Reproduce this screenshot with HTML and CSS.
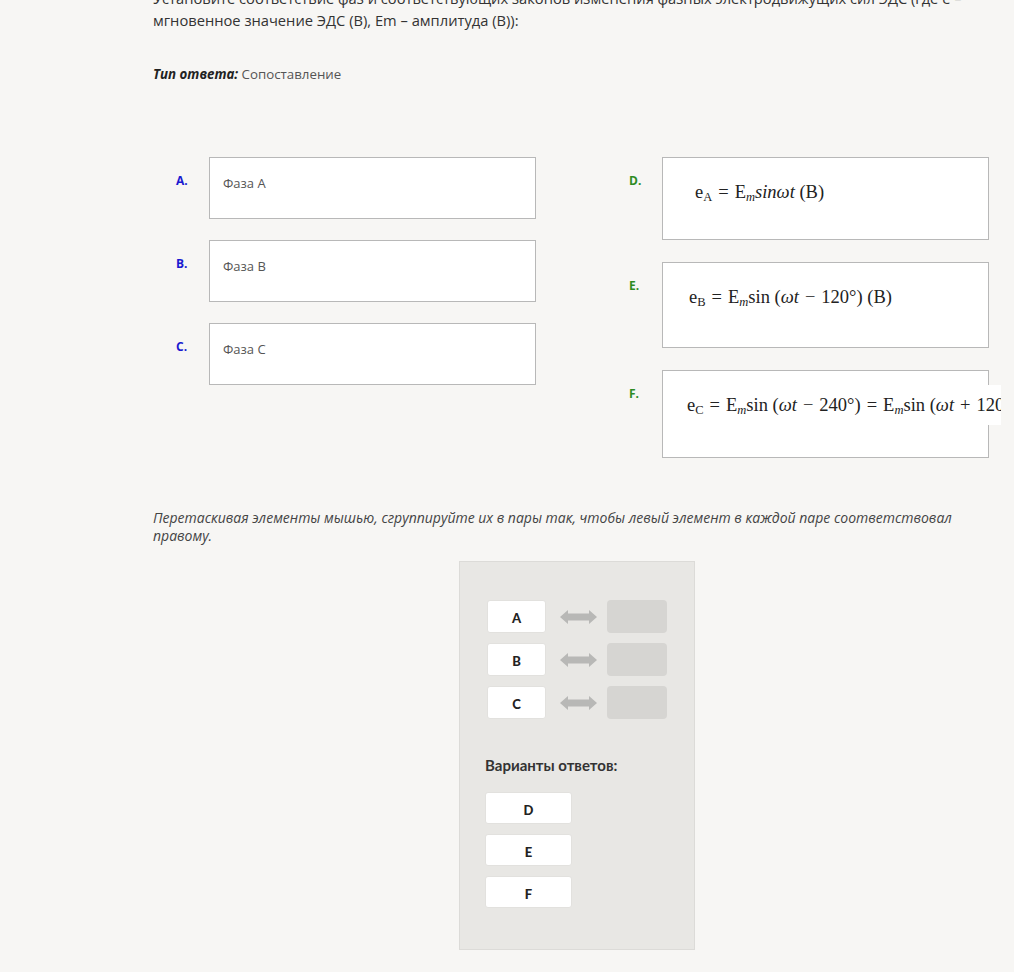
FILE: index.html
```html
<!DOCTYPE html>
<html lang="ru">
<head>
<meta charset="utf-8">
<link rel="stylesheet" href="styles.css">
</head>
<body>
<main class="page">
  <p class="question">Установите соответствие фаз и соответствующих законов изменения фазных электродвижущих сил ЭДС (где е – мгновенное значение ЭДС (В), Em – амплитуда (В)):</p>
  <p class="type"><b>Тип ответа:</b> Сопоставление</p>

  <div class="columns">
    <div class="col col-left">
      <div class="item">
        <span class="lbl lbl-left">A.</span>
        <div class="box box-text">Фаза A</div>
      </div>
      <div class="item">
        <span class="lbl lbl-left">B.</span>
        <div class="box box-text">Фаза B</div>
      </div>
      <div class="item">
        <span class="lbl lbl-left">C.</span>
        <div class="box box-text">Фаза C</div>
      </div>
    </div>
    <div class="col col-right">
      <div class="item">
        <span class="lbl lbl-right">D.</span>
        <div class="box box-formula box-d"><span class="formula f-d">e<sub>A</sub><span class="op">=</span>E<sub><i>m</i></sub><i>sinωt</i> (B)</span></div>
      </div>
      <div class="item">
        <span class="lbl lbl-right">E.</span>
        <div class="box box-formula box-e"><span class="formula f-e">e<sub>B</sub><span class="op">=</span>E<sub><i>m</i></sub>sin (<i>ωt</i><span class="op">−</span>120°) (B)</span></div>
      </div>
      <div class="item">
        <span class="lbl lbl-right">F.</span>
        <div class="box box-formula box-f"><span class="formula f-f">e<sub>C</sub><span class="op">=</span>E<sub><i>m</i></sub>sin (<i>ωt</i><span class="op">−</span>240°)<span class="op">=</span>E<sub><i>m</i></sub>sin (<i>ωt</i><span class="op">+</span>120°) (B)</span></div>
      </div>
    </div>
  </div>

  <p class="hint">Перетаскивая элементы мышью, сгруппируйте их в пары так, чтобы левый элемент в каждой паре соответствовал правому.</p>

  <section class="panel">
    <div class="pairs">
      <div class="pair">
        <div class="chip">A</div>
        <svg class="arrow" width="37" height="14" viewBox="0 0 37 14"><path d="M0 7 L8 0 L8 3.5 L29 3.5 L29 0 L37 7 L29 14 L29 10.5 L8 10.5 L8 14 Z" fill="#b8b8b6"/></svg>
        <div class="slot"></div>
      </div>
      <div class="pair">
        <div class="chip">B</div>
        <svg class="arrow" width="37" height="14" viewBox="0 0 37 14"><path d="M0 7 L8 0 L8 3.5 L29 3.5 L29 0 L37 7 L29 14 L29 10.5 L8 10.5 L8 14 Z" fill="#b8b8b6"/></svg>
        <div class="slot"></div>
      </div>
      <div class="pair">
        <div class="chip">C</div>
        <svg class="arrow" width="37" height="14" viewBox="0 0 37 14"><path d="M0 7 L8 0 L8 3.5 L29 3.5 L29 0 L37 7 L29 14 L29 10.5 L8 10.5 L8 14 Z" fill="#b8b8b6"/></svg>
        <div class="slot"></div>
      </div>
    </div>
    <h3 class="options-title">Варианты ответов:</h3>
    <div class="options">
      <div class="chip chip-wide">D</div>
      <div class="chip chip-wide">E</div>
      <div class="chip chip-wide">F</div>
    </div>
  </section>
</main>
</body>
</html>
```

FILE: styles.css
```css
html, body {
  margin: 0;
  padding: 0;
  background: #f7f6f4;
}

.page {
  width: 847px;
  margin-left: 153px;
  font-family: "Open Sans", "Noto Sans", sans-serif;
  color: #333;
}

.question {
  margin: -13px 0 0 0;
  font-size: 14.7px;
  line-height: 22px;
  color: #333;
}

.type {
  margin: 33px 0 0 0;
  font-size: 13.3px;
  line-height: 20px;
  color: #555;
}

.type b {
  font-style: italic;
  color: #222;
}

.columns {
  margin-top: 73px;
  margin-left: 23px;
  display: grid;
  grid-template-columns: 360px 360px;
  column-gap: 93px;
  align-items: start;
}

.col {
  display: flex;
  flex-direction: column;
}

.col-left { gap: 21px; }
.col-right { gap: 22px; }

.item {
  display: flex;
  align-items: flex-start;
}

.lbl {
  width: 33px;
  flex: none;
  font-size: 12px;
  font-weight: 700;
  line-height: 16px;
  padding-top: 16px;
}

.lbl-left { color: #1a1ad0; }
.lbl-right { color: #2e8b22; }

.box {
  box-sizing: border-box;
  width: 327px;
  background: #fff;
  border: 1px solid #b8b8b8;
}

.box-text {
  height: 62px;
  padding: 16px 0 0 13px;
  font-size: 13px;
  line-height: 18px;
  color: #555;
}

.box-formula {
  padding-top: 14px;
}

.box-d { height: 83px; }
.box-e { height: 86px; }
.box-f { height: 88px; }

.formula {
  display: block;
  box-sizing: border-box;
  height: 40px;
  line-height: 40px;
  white-space: nowrap;
  overflow: hidden;
  background: #fff;
  font-family: "Liberation Serif", "DejaVu Serif", serif;
  font-size: 18.5px;
  color: #222;
}

.formula sub {
  font-size: 12.5px;
  vertical-align: -3px;
  line-height: 0;
}

.formula .op {
  margin: 0 6px;
}

.f-d { padding-left: 32px; }
.f-e { padding-left: 26px; }
.f-f { padding-left: 24px; width: 338px; }

.hint {
  margin: 51px 0 0 0;
  font-size: 14px;
  line-height: 18px;
  font-style: italic;
  color: #444;
}

.panel {
  box-sizing: border-box;
  width: 236px;
  margin: 16px 0 0 306px;
  padding: 38px 0 41px 27px;
  background: #e8e7e4;
  border: 1px solid #dcdbd8;
}

.pairs {
  display: flex;
  flex-direction: column;
  gap: 10px;
}

.pair {
  display: flex;
  align-items: center;
}

.chip {
  box-sizing: border-box;
  width: 59px;
  height: 33px;
  display: flex;
  align-items: center;
  justify-content: center;
  padding-top: 3px;
  background: #fff;
  border: 1px solid #e2e1de;
  border-radius: 3px;
  font-family: "Lato", "Open Sans", sans-serif;
  font-weight: 900;
  font-size: 13px;
  color: #222;
}

.arrow {
  display: block;
  margin: 0 10px 0 14px;
}

.slot {
  width: 60px;
  height: 33px;
  background: #d6d5d2;
  border-radius: 4px;
}

.options-title {
  margin: 36px 0 0 -2px;
  font-family: "Lato", "Open Sans", sans-serif;
  font-size: 15px;
  line-height: 20px;
  font-weight: 700;
  color: #333;
}

.options {
  margin: 17px 0 0 -2px;
  display: flex;
  flex-direction: column;
  gap: 10px;
}

.chip-wide {
  width: 87px;
  height: 32px;
}
```
